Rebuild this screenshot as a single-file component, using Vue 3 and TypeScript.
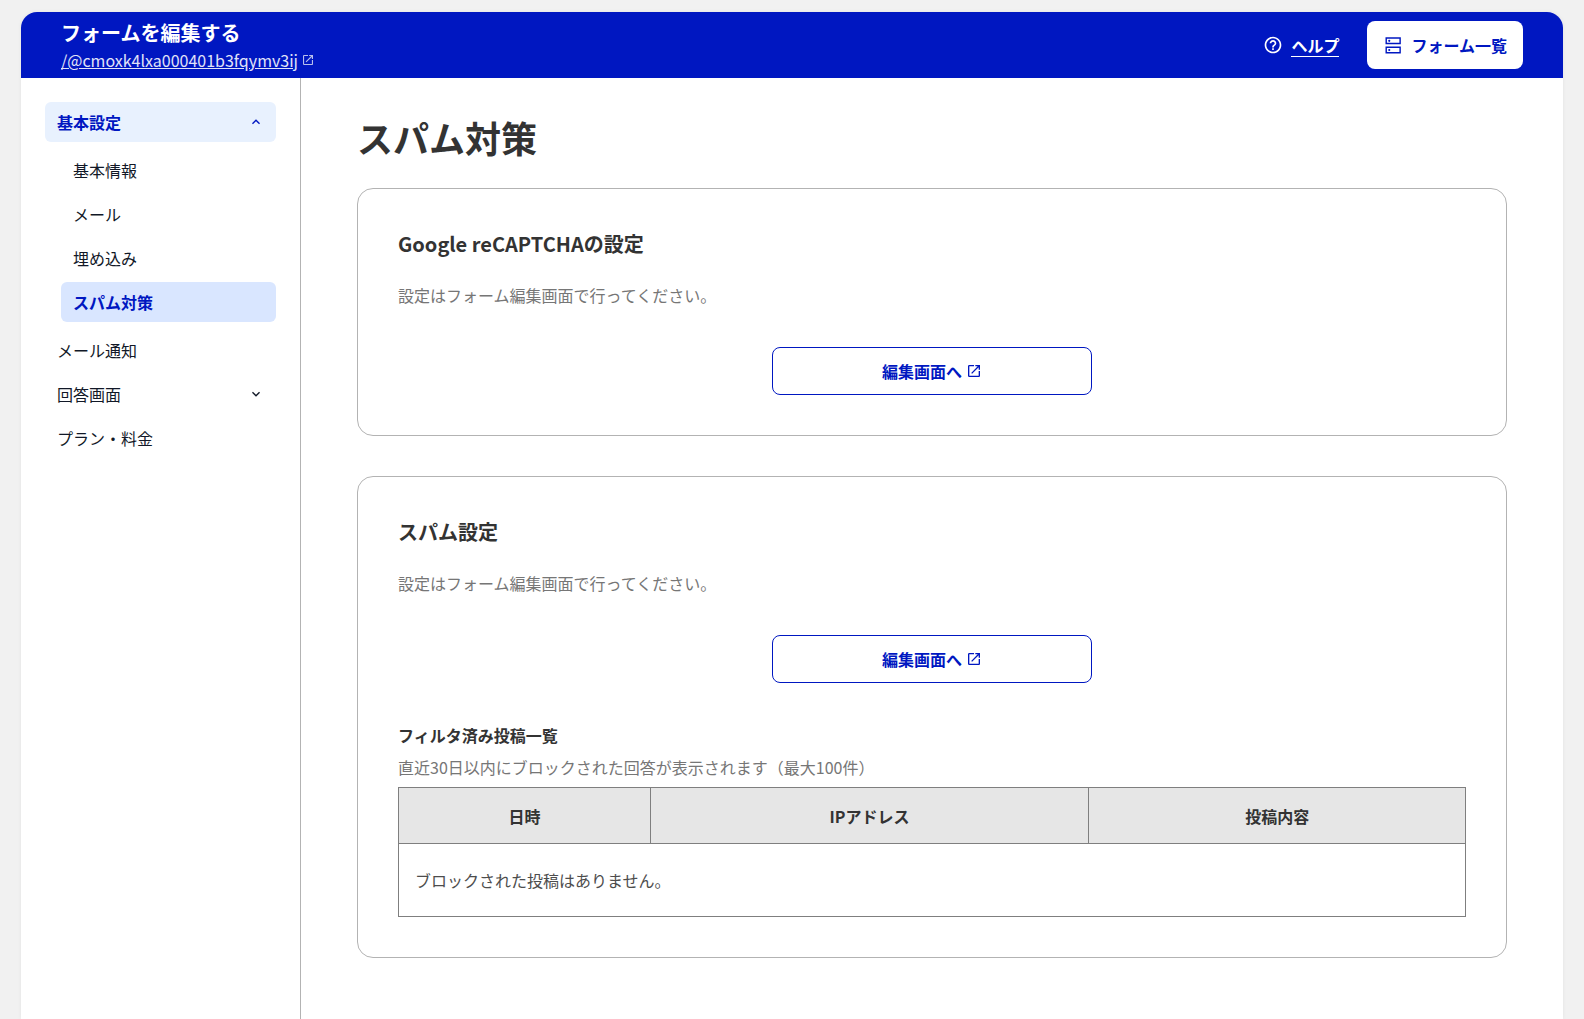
<script setup lang="ts">
import { ref } from 'vue'

interface NavChild {
  label: string
  current?: boolean
}

interface NavItem {
  label: string
  children?: NavChild[]
}

const navItems: NavItem[] = [
  {
    label: '基本設定',
    children: [
      { label: '基本情報' },
      { label: 'メール' },
      { label: '埋め込み' },
      { label: 'スパム対策', current: true },
    ],
  },
  { label: 'メール通知' },
  { label: '回答画面', children: [] },
  { label: 'プラン・料金' },
]

const openGroup = ref<string>('基本設定')

function toggle(label: string): void {
  openGroup.value = openGroup.value === label ? '' : label
}

const openInNew =
  'M19 19H5V5h7V3H5a2 2 0 0 0-2 2v14a2 2 0 0 0 2 2h14c1.1 0 2-.9 2-2v-7h-2v7zM14 3v2h3.59l-9.83 9.83 1.41 1.41L19 6.41V10h2V3h-7z'
</script>

<template>
  <div class="sheet">
    <header class="topbar">
      <div class="form-info">
        <p class="form-title">フォームを編集する</p>
        <a class="form-link" href="#">
          <span class="form-path">/@cmoxk4lxa000401b3fqymv3ij</span>
          <svg class="icon-small" viewBox="3 3 18 18" aria-hidden="true"><path :d="openInNew" /></svg>
        </a>
      </div>
      <div class="actions">
        <a class="help" href="#">
          <svg class="icon" viewBox="0 0 24 24" aria-hidden="true">
            <path d="M11 18h2v-2h-2v2zm1-16C6.48 2 2 6.48 2 12s4.48 10 10 10 10-4.48 10-10S17.52 2 12 2zm0 18c-4.41 0-8-3.59-8-8s3.59-8 8-8 8 3.59 8 8-3.59 8-8 8zm0-14c-2.21 0-4 1.79-4 4h2c0-1.1.9-2 2-2s2 .9 2 2c0 2-3 1.75-3 5h2c0-2.25 3-2.5 3-5 0-2.21-1.79-4-4-4z" />
          </svg>
          <span class="help-label">ヘルプ</span>
        </a>
        <a class="list-link" href="#">
          <svg class="icon" viewBox="0 0 24 24" aria-hidden="true">
            <path d="M3 2.800h18.400v8.300H3zM4.700 4.500v4.900h15V4.500zM3 13.800h18.400v8.300H3zM4.700 15.500v4.900h15v-4.900z" fill-rule="evenodd" />
            <circle cx="7.500" cy="7" r="1.300" />
            <circle cx="7.500" cy="18" r="1.300" />
          </svg>
          フォーム一覧
        </a>
      </div>
    </header>

    <div class="body">
      <nav class="sidebar">
        <ul class="nav">
          <li v-for="item in navItems" :key="item.label">
            <button
              v-if="item.children"
              type="button"
              class="nav-item"
              :class="{ open: openGroup === item.label }"
              :aria-expanded="openGroup === item.label"
              @click="toggle(item.label)"
            >
              {{ item.label }}
              <svg class="chevron" viewBox="0 0 24 24" aria-hidden="true">
                <path v-if="openGroup === item.label" d="M12 8l-6 6 1.41 1.41L12 10.83l4.59 4.58L18 14l-6-6z" />
                <path v-else d="M16.59 8.59L12 13.17 7.41 8.59 6 10l6 6 6-6-1.41-1.41z" />
              </svg>
            </button>
            <a v-else class="nav-item" href="#">{{ item.label }}</a>
            <ul v-if="item.children && openGroup === item.label" class="subnav">
              <li v-for="child in item.children" :key="child.label">
                <a
                  class="nav-item"
                  :class="{ current: child.current }"
                  :aria-current="child.current ? 'page' : undefined"
                  href="#"
                >{{ child.label }}</a>
              </li>
            </ul>
          </li>
        </ul>
      </nav>

      <main class="content">
        <h1>スパム対策</h1>

        <section class="card">
          <h2>Google reCAPTCHAの設定</h2>
          <p class="note">設定はフォーム編集画面で行ってください。</p>
          <a class="edit-link" href="#">
            編集画面へ
            <svg class="icon-medium" viewBox="0 0 24 24" aria-hidden="true"><path :d="openInNew" /></svg>
          </a>
        </section>

        <section class="card">
          <h2>スパム設定</h2>
          <p class="note">設定はフォーム編集画面で行ってください。</p>
          <a class="edit-link" href="#">
            編集画面へ
            <svg class="icon-medium" viewBox="0 0 24 24" aria-hidden="true"><path :d="openInNew" /></svg>
          </a>
          <div class="filtered">
            <h3 id="filtered-title">フィルタ済み投稿一覧</h3>
            <p class="note">直近30日以内にブロックされた回答が表示されます（最大100件）</p>
            <table aria-labelledby="filtered-title">
              <thead>
                <tr>
                  <th class="col-date" scope="col">日時</th>
                  <th class="col-ip" scope="col">IPアドレス</th>
                  <th scope="col">投稿内容</th>
                </tr>
              </thead>
              <tbody>
                <tr>
                  <td colspan="3">ブロックされた投稿はありません。</td>
                </tr>
              </tbody>
            </table>
          </div>
        </section>
      </main>
    </div>
  </div>
</template>

<style>
html,
body,
#app {
  height: 100%;
}

body {
  background: #f1f1f1;
}

#app {
  display: flex;
  overflow: hidden;
}
</style>

<style scoped>
* {
  box-sizing: border-box;
}

h1,
h2,
h3,
p,
ul {
  margin: 0;
  padding: 0;
}

ul {
  list-style: none;
}

a {
  color: inherit;
  text-decoration: none;
}

svg {
  flex: none;
  fill: currentColor;
}

.sheet {
  flex: 1;
  display: flex;
  flex-direction: column;
  margin: 12px 21px 0;
  border-radius: 16px 16px 0 0;
  background: #fff;
  box-shadow: 0 0 4px rgba(0, 0, 0, 0.06);
  color: #333;
  font-family: "Noto Sans CJK JP", sans-serif;
  font-size: 16px;
  line-height: 24px;
}

.topbar {
  display: flex;
  align-items: center;
  justify-content: space-between;
  height: 66px;
  padding: 0 40px;
  border-radius: 16px 16px 0 0;
  background: #0017c1;
  color: #fff;
}

.form-title {
  font-size: 20px;
  font-weight: 700;
  line-height: 30px;
}

.form-link {
  display: flex;
  align-items: center;
  gap: 5px;
  color: #e0e3f8;
}

.form-path {
  text-decoration: underline;
}

.icon-small {
  width: 10px;
  height: 10px;
  fill: #b8bfec;
}

.icon-medium {
  width: 16px;
  height: 16px;
}

.icon {
  width: 20px;
  height: 20px;
}

.actions {
  display: flex;
  align-items: center;
  gap: 28px;
  font-weight: 700;
}

.help {
  display: flex;
  align-items: center;
  gap: 8px;
}

.help-label {
  border-bottom: 1px solid #fff;
  line-height: 22px;
}

.list-link {
  display: flex;
  align-items: center;
  gap: 8px;
  height: 48px;
  padding: 0 16px;
  border-radius: 8px;
  background: #fff;
  color: #0017c1;
}

.body {
  flex: 1;
  display: flex;
}

.sidebar {
  flex: none;
  width: 280px;
  padding: 24px;
  border-right: 1px solid #b3b3b3;
}

.nav,
.subnav {
  display: flex;
  flex-direction: column;
  gap: 4px;
}

.subnav {
  padding: 8px 0 4px 16px;
}

.nav-item {
  display: flex;
  align-items: center;
  justify-content: space-between;
  width: 100%;
  height: 40px;
  padding: 0 12px;
  border: 0;
  border-radius: 6px;
  background: none;
  color: #111827;
  font: inherit;
  text-align: left;
}

.nav-item.open {
  background: #e8f1fe;
  color: #0017c1;
  font-weight: 700;
}

.nav-item.current {
  background: #d9e6ff;
  color: #0017c1;
  font-weight: 700;
}

.chevron {
  width: 16px;
  height: 16px;
}

.content {
  flex: 1;
  display: flex;
  flex-direction: column;
  gap: 40px;
  padding: 32px 56px;
}

h1 {
  margin-bottom: -16px;
  font-size: 36px;
  line-height: 54px;
}

.card {
  display: flex;
  flex-direction: column;
  padding: 40px;
  border: 1px solid #b3b3b3;
  border-radius: 16px;
}

h2 {
  margin-bottom: 24px;
  font-size: 20px;
  line-height: 30px;
}

h3 {
  font-size: 16px;
}

.note {
  color: #767676;
}

.edit-link {
  align-self: center;
  display: flex;
  align-items: center;
  justify-content: center;
  gap: 4px;
  width: 320px;
  height: 48px;
  margin-top: 40px;
  border: 1px solid #0017c1;
  border-radius: 8px;
  color: #0017c1;
  font-weight: 700;
}

.filtered {
  display: flex;
  flex-direction: column;
  gap: 8px;
  margin-top: 40px;
}

table {
  width: 100%;
  border-collapse: collapse;
}

th,
td {
  border: 1px solid #7f7f7f;
}

th {
  height: 56px;
  padding: 0 16px;
  background: #e6e6e6;
}

td {
  height: 73px;
  padding: 0 16px;
  color: #4d4d4d;
}

.col-date {
  width: 23.6%;
}

.col-ip {
  width: 41.1%;
}
</style>
